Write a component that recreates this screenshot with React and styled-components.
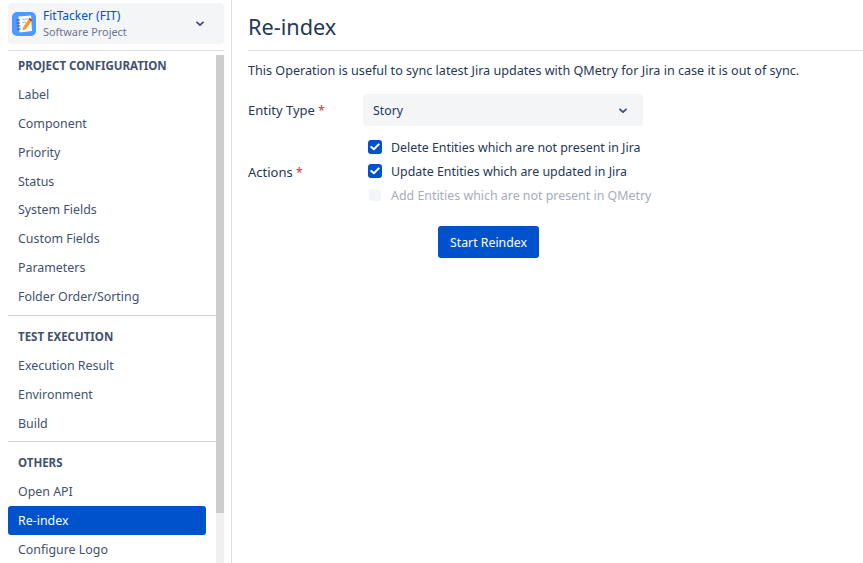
import React from 'react';
import styled, {createGlobalStyle} from 'styled-components';

const GlobalStyle = createGlobalStyle`
    html, body {
        margin: 0;
        height: 100%;
        overflow: hidden;
        background: #fff;
    }

    body {
        font-family: "Noto Sans", sans-serif;
        font-size: 13px;
        color: #42526e;
    }
`;

const Page = styled.div`
    display: flex;
    width: 863px;
    height: 563px;
    overflow: hidden;
`;

const Sidebar = styled.aside`
    width: 232px;
    height: 563px;
    flex: none;
    display: flex;
    flex-direction: column;
    padding: 3px 7px 0 8px;
    box-sizing: border-box;
    border-right: 1px solid #dfe1e6;
    overflow: hidden;
`;

const ProjectButton = styled.div`
    height: 41px;
    flex: none;
    display: flex;
    align-items: center;
    padding: 0 20px 0 4px;
    background: #f4f5f7;
    border-radius: 4px;
`;

const ProjectInfo = styled.div`
    flex: 1;
    margin-left: 7px;
    padding-top: 1px;
`;

const ProjectName = styled.div`
    font-size: 12px;
    line-height: 16px;
    color: #0052cc;
`;

const ProjectType = styled.div`
    font-size: 10.9px;
    line-height: 16px;
    color: #6b778c;
`;

const Divider = styled.div`
    height: 1px;
    flex: none;
    background: #dfe1e6;
    margin-top: 6px;
`;

const ScrollArea = styled.div`
    display: flex;
    flex: 1;
    min-height: 0;
    margin-top: 4px;
`;

const Menu = styled.nav`
    width: 208px;
    flex: none;
`;

const Scrollbar = styled.div`
    width: 8px;
    flex: none;
    background: #f0f0f0;

    &::before {
        content: '';
        display: block;
        height: 458px;
        background: #cdcdcd;
    }
`;

const Section = styled.div`
    padding-bottom: 4px;
    border-bottom: ${props => (props.$last ? 'none' : '1px solid #cfd2d6')};
    margin-bottom: 10px;
`;

const SectionTitle = styled.div`
    font-size: 11.5px;
    font-weight: 700;
    line-height: 22px;
    padding-left: 10px;
    color: #42526e;
    margin-bottom: 3px;
`;

const MenuItem = styled.div`
    width: 198px;
    height: 28.86px;
    display: flex;
    align-items: center;
    box-sizing: border-box;
    padding-left: 10px;
    font-size: 12.4px;
    border-radius: 3px;
    color: ${props => (props.$active ? '#fff' : '#42526e')};
    background: ${props => (props.$active ? '#0052cc' : 'transparent')};
`;

const Main = styled.main`
    flex: 1;
    padding: 0 0 0 16px;
    min-width: 0;
`;

const Title = styled.h1`
    margin: 0;
    font-size: 21.7px;
    font-weight: 400;
    line-height: 54px;
    color: #253858;
    border-bottom: 1px solid #dfe1e6;
    height: 50px;
`;

const Intro = styled.p`
    margin: 11px 0 0;
    font-size: 12.6px;
    line-height: 18px;
    color: #253858;
`;

const FormRow = styled.div`
    display: flex;
    align-items: center;
    margin-top: ${props => props.$top || 0}px;
`;

const FieldLabel = styled.label`
    width: 115px;
    flex: none;
    font-size: 13px;
    padding-top: ${props => props.$nudge || 0}px;
    color: #253858;
`;

const Required = styled.span`
    color: #e5263c;
    font-size: 12px;
`;

const SelectBox = styled.div`
    width: 280px;
    height: 32px;
    display: flex;
    align-items: center;
    justify-content: space-between;
    box-sizing: border-box;
    padding: 1px 16px 0 10px;
    font-size: 12.3px;
    color: #253858;
    background: #f4f5f7;
    border-radius: 3px;
`;

const CheckList = styled.div`
    display: flex;
    flex-direction: column;
    gap: 6px;
    padding-left: 5px;
`;

const CheckRow = styled.div`
    height: 18px;
    display: flex;
    align-items: center;
    gap: 9px;
    font-size: 12.4px;
    color: ${props => (props.$disabled ? '#a5adba' : '#253858')};
`;

const CheckBox = styled.span`
    width: ${props => (props.$disabled ? 12 : 14)}px;
    height: ${props => (props.$disabled ? 12 : 14)}px;
    margin: 0 ${props => (props.$disabled ? 1 : 0)}px;
    flex: none;
    display: flex;
    align-items: center;
    justify-content: center;
    border-radius: 3px;
    background: ${props => (props.$disabled ? '#f4f5f7' : '#0052cc')};
`;

const Actions = styled.div`
    margin: 22px 0 0 190px;
`;

const PrimaryButton = styled.button`
    width: 101px;
    height: 32px;
    border: none;
    border-radius: 3px;
    background: #0052cc;
    color: #fff;
    font-family: inherit;
    font-size: 12.3px;
    padding: 0;
`;

function Chevron() {
    return (
        <svg width="8" height="6" viewBox="0 0 8 6">
            <path d="M1 1.3 4 4.2l3-2.9" fill="none" stroke="#42526e" strokeWidth="1.8" strokeLinecap="round" strokeLinejoin="round" />
        </svg>
    );
}

function Tick() {
    return (
        <svg width="10" height="8" viewBox="0 0 10 8">
            <path d="M1.3 4 3.9 6.3 8.7 1.4" fill="none" stroke="#fff" strokeWidth="2" strokeLinecap="round" strokeLinejoin="round" />
        </svg>
    );
}

function ProjectLogo() {
    return (
        <svg width="24" height="24" viewBox="0 0 24 24" style={{flex: 'none'}}>
            <rect width="24" height="24" rx="5" fill="#4c9aff" />
            <path d="M6.500 4.500 19 3.500 20 19l-12.500 1.500z" fill="#fff" />
            <path d="M4.500 8h3.500M4.700 11h3.500M4.900 14h3.500M5.100 17h3.500" stroke="#42526e" strokeWidth="1" />
            <path d="M10 7.500l6-.5M10 10.500l4-.3" stroke="#b3bac5" strokeWidth="1" />
            <path d="m10.500 18.500.8-3.500 5.200-7.500 2.700 1.900-5.200 7.500z" fill="#ff991f" />
            <path d="m16.500 7.500 1.100-1.700 2.700 1.900-1.100 1.700z" fill="#de350b" />
        </svg>
    );
}

const sections = [
    {title: 'PROJECT CONFIGURATION', items: ['Label', 'Component', 'Priority', 'Status', 'System Fields', 'Custom Fields', 'Parameters', 'Folder Order/Sorting']},
    {title: 'TEST EXECUTION', items: ['Execution Result', 'Environment', 'Build']},
    {title: 'OTHERS', items: ['Open API', 'Re-index', 'Configure Logo'], last: true},
];

const checks = [
    {label: 'Delete Entities which are not present in Jira'},
    {label: 'Update Entities which are updated in Jira'},
    {label: 'Add Entities which are not present in QMetry', disabled: true},
];

export default function App() {
    return (
        <Page>
            <GlobalStyle />
            <Sidebar>
                <ProjectButton>
                    <ProjectLogo />
                    <ProjectInfo>
                        <ProjectName>FitTacker (FIT)</ProjectName>
                        <ProjectType>Software Project</ProjectType>
                    </ProjectInfo>
                    <Chevron />
                </ProjectButton>
                <Divider />
                <ScrollArea>
                    <Menu>
                        {sections.map(section => (
                            <Section key={section.title} $last={section.last}>
                                <SectionTitle>{section.title}</SectionTitle>
                                {section.items.map(item => (
                                    <MenuItem key={item} $active={item === 'Re-index'}>{item}</MenuItem>
                                ))}
                            </Section>
                        ))}
                    </Menu>
                    <Scrollbar />
                </ScrollArea>
            </Sidebar>
            <Main>
                <Title>Re-index</Title>
                <Intro>This Operation is useful to sync latest Jira updates with QMetry for Jira in case it is out of sync.</Intro>
                <FormRow $top={14}>
                    <FieldLabel>Entity Type <Required>*</Required></FieldLabel>
                    <SelectBox>
                        Story
                        <Chevron />
                    </SelectBox>
                </FormRow>
                <FormRow $top={12}>
                    <FieldLabel $nudge={1}>Actions <Required>*</Required></FieldLabel>
                    <CheckList>
                        {checks.map(check => (
                            <CheckRow key={check.label} $disabled={check.disabled}>
                                <CheckBox $disabled={check.disabled}>{!check.disabled && <Tick />}</CheckBox>
                                {check.label}
                            </CheckRow>
                        ))}
                    </CheckList>
                </FormRow>
                <Actions>
                    <PrimaryButton>Start Reindex</PrimaryButton>
                </Actions>
            </Main>
        </Page>
    );
}
